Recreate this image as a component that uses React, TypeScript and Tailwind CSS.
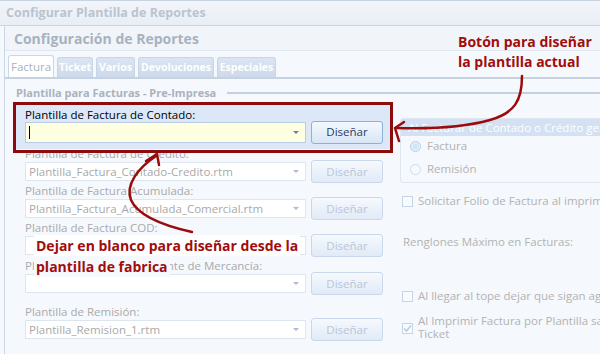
const font = { fontFamily: '"Segoe UI", "Open Sans", "Noto Sans", sans-serif' };

function Combo({ value }: { value?: string }) {
  return (
    <div className="flex h-[19px] w-[281px] items-center justify-between border border-[#dde5ef] bg-white pl-[3px] pr-[6px] text-[11.5px] text-[#a9a9a9]">
      <span className="truncate leading-[14px]">{value}</span>
      <span className="h-0 w-0 border-x-[3px] border-t-[3px] border-x-transparent border-t-[#a9bcd3]" />
    </div>
  );
}

function DesignButton({ active }: { active?: boolean }) {
  return (
    <div
      className={
        "ml-[5px] flex h-[23px] w-[72px] items-center justify-center rounded-[3px] border text-[11.5px] " +
        (active
          ? "border-[#8fb0d8] bg-gradient-to-b from-[#f4f8fd] to-[#d9e6f6] text-[#1f3a64]"
          : "border-[#c9d8ec] bg-gradient-to-b from-[#f6f9fd] to-[#e1eaf6] text-[#b8c6d8]")
      }
    >
      Diseñar
    </div>
  );
}

function Row({ label, value, className }: { label: string; value?: string; className?: string }) {
  return (
    <div className={"flex h-[37px] flex-col " + (className || "")}>
      <div className="h-[13px] text-[11.5px] leading-[13px] text-[#aaaaaa] whitespace-nowrap">{label}</div>
      <div className="flex h-[23px] items-center">
        <Combo value={value} />
        <DesignButton />
      </div>
    </div>
  );
}

function Check({ checked }: { checked?: boolean }) {
  return (
    <span className="flex h-[11px] w-[11px] shrink-0 items-center justify-center border border-[#c6d4e6] bg-[#f8fbfe]">
      {checked && (
        <svg width="9" height="9" viewBox="0 0 9 9">
          <path d="M1 4.5 L3.5 7 L8 1.5" stroke="#b9cbe2" strokeWidth="1.6" fill="none" />
        </svg>
      )}
    </span>
  );
}

function Radio({ on }: { on?: boolean }) {
  return (
    <span
      className={
        "h-[11px] w-[11px] shrink-0 rounded-full border " +
        (on ? "border-[#b5cde6] bg-[radial-gradient(circle,#cfe6f8_30%,#e9f3fb_70%)]" : "border-[#cfdbe9] bg-[#f7fafd]")
      }
    />
  );
}

export default function App() {
  const tabs = [
    { t: "Ticket", w: "w-[36px]" },
    { t: "Varios", w: "w-[39px]" },
    { t: "Devoluciones", w: "w-[76px]" },
    { t: "Especiales", w: "w-[59px]" },
  ];
  return (
    <div className="relative flex h-[354px] w-[600px] flex-col overflow-hidden bg-[#f5f8fc]" style={font}>
      {/* title bar */}
      <div className="flex h-[26px] shrink-0 items-center border-y border-[#c9d4e3] bg-gradient-to-b from-[#f2f5fa] to-[#e9eef6] pl-[6px] text-[12.5px] font-bold text-[#bac4d0]">
        Configurar Plantilla de Reportes
      </div>

      <div className="ml-[4px] flex flex-1 flex-col border-l border-[#ccd6e4]">
        {/* header */}
        <div className="flex h-[25px] shrink-0 items-center border-b border-[#dfe6f0] bg-[#f1f5fa] pl-[9px] text-[14px] font-bold text-[#a7b2bf]">
          Configuración de Reportes
        </div>

        {/* tabs */}
        <div className="flex h-[26px] shrink-0 items-end gap-[3px] pl-[3px]">
          <div className="flex h-[22px] w-[46px] items-center justify-center rounded-t-[3px] border border-b-0 border-[#ccd7e5] bg-white text-[11.5px] text-[#a9b3bf]">
            Factura
          </div>
          {tabs.map((t) => (
            <div
              key={t.t}
              className={
                "flex h-[20px] items-center justify-center rounded-t-[3px] border border-b-0 border-[#c8d5e6] bg-gradient-to-b from-[#dbe5f2] to-[#cddaeb] text-[10.5px] font-bold text-white " +
                t.w
              }
            >
              {t.t}
            </div>
          ))}
        </div>

        {/* panel */}
        <div className="flex flex-1 flex-col border-t-2 border-[#c6d1e2] bg-[#f5f8fc]">
          <div className="flex h-[20px] items-center pl-[11px] pt-[8px]">
            <span className="text-[11px] font-bold text-[#a9b3bf] whitespace-nowrap">Plantilla para Facturas - Pre-Impresa</span>
            <span className="ml-[11px] h-[2px] flex-1 bg-[#c5cfde]" />
          </div>

          <div className="mt-[5px] flex">
            {/* left column */}
            <div className="ml-[8px] flex w-[380px] shrink-0 flex-col">
              <div className="flex h-[45px] flex-col bg-[#dce8f7] pl-[12px] pt-[4px]">
                <div className="h-[13px] text-[11.5px] leading-[13px] text-black">Plantilla de Factura de Contado:</div>
                <div className="flex h-[22px] items-center">
                  <div className="flex h-[21px] w-[281px] items-center justify-between border border-[#b9cce4] bg-[#fefee0] pl-[3px] pr-[6px]">
                    <span className="h-[13px] w-px bg-black" />
                    <span className="h-0 w-0 border-x-[3px] border-t-[3px] border-x-transparent border-t-[#5a7fae]" />
                  </div>
                  <DesignButton active />
                </div>
              </div>
              <div className="-mt-[2px] flex flex-col pl-[12px]">
                <Row label="Plantilla de Factura de Crédito:" value="Plantilla_Factura_Contado-Credito.rtm" />
                <Row label="Plantilla de Factura Acumulada:" value="Plantilla_Factura_Acumulada_Comercial.rtm" />
                <Row label="Plantilla de Factura COD:" />
                <Row label="Plantilla de Factura Pendiente de Mercancía:" className="mt-[1px]" />
                <Row label="Plantilla de Remisión:" value="Plantilla_Remision_1.rtm" className="mt-[9px]" />
              </div>
            </div>

            {/* right column */}
            <div className="ml-[7px] flex flex-1 flex-col pt-[14px] text-[11.5px] text-[#b3b3b3]">
              <div className="h-[65px] rounded-[3px] border border-[#dde6f1]">
                <div className="flex h-[17px] items-center bg-[#d3e1f2] pl-[7px] text-white whitespace-nowrap">
                  Al Facturar de Contado o Crédito generar
                </div>
                <div className="mt-[4px] flex h-[12px] items-center gap-[6px] pl-[9px]">
                  <Radio on />
                  <span>Factura</span>
                </div>
                <div className="mt-[11px] flex h-[12px] items-center gap-[6px] pl-[9px]">
                  <Radio />
                  <span>Remisión</span>
                </div>
              </div>
              <div className="mt-[12px] flex h-[12px] items-center gap-[5px] pl-[2px] whitespace-nowrap">
                <Check />
                <span>Solicitar Folio de Factura al imprimir</span>
              </div>
              <div className="mt-[29px] h-[12px] pl-[3px] leading-[12px]">Renglones Máximo en Facturas:</div>
              <div className="mt-[42px] flex h-[12px] items-center gap-[5px] pl-[2px] whitespace-nowrap">
                <Check />
                <span>Al llegar al tope dejar que sigan agregando</span>
              </div>
              <div className="mt-[12px] flex items-start gap-[5px] pl-[2px]">
                <span className="mt-[9px]">
                  <Check checked />
                </span>
                <span className="leading-[13px] whitespace-nowrap">
                  Al Imprimir Factura por Plantilla sacar
                  <br />
                  Ticket
                </span>
              </div>
            </div>
          </div>
        </div>
      </div>

      {/* annotations */}
      <div className="absolute left-[13px] top-[102px] h-[51px] w-[380px] border-[3px] border-[#8c0b0b]" />
      <div className="absolute left-[458px] top-[32px] text-[14px] font-bold leading-[20px] whitespace-nowrap text-[#a00d0d]">
        Botón para diseñar
        <br />
        la plantilla actual
      </div>
      <div className="absolute left-[34px] top-[235px] text-[14px] font-bold leading-[21px] whitespace-nowrap text-[#a00d0d]">
        <div className="bg-white px-[2px]">Dejar en blanco para diseñar desde la</div>
        <div className="inline-block bg-[#f5f8fc] px-[2px]">plantilla de fabrica</div>
      </div>
      <svg className="pointer-events-none absolute inset-0" width="600" height="354">
        <g stroke="#9a0c0c" strokeWidth="2.5" fill="none" strokeLinecap="round" strokeLinejoin="round">
          <path d="M522,76 C522,100 515,113 490,120 C465,127 430,129 396,128" />
          <path d="M404,122 L395,128 L399,141" />
          <path d="M192,232 C165,226 138,216 131,200 C125,185 138,168 156,156" />
          <path d="M146,161 L157,154 L159,165" />
        </g>
      </svg>
    </div>
  );
}
